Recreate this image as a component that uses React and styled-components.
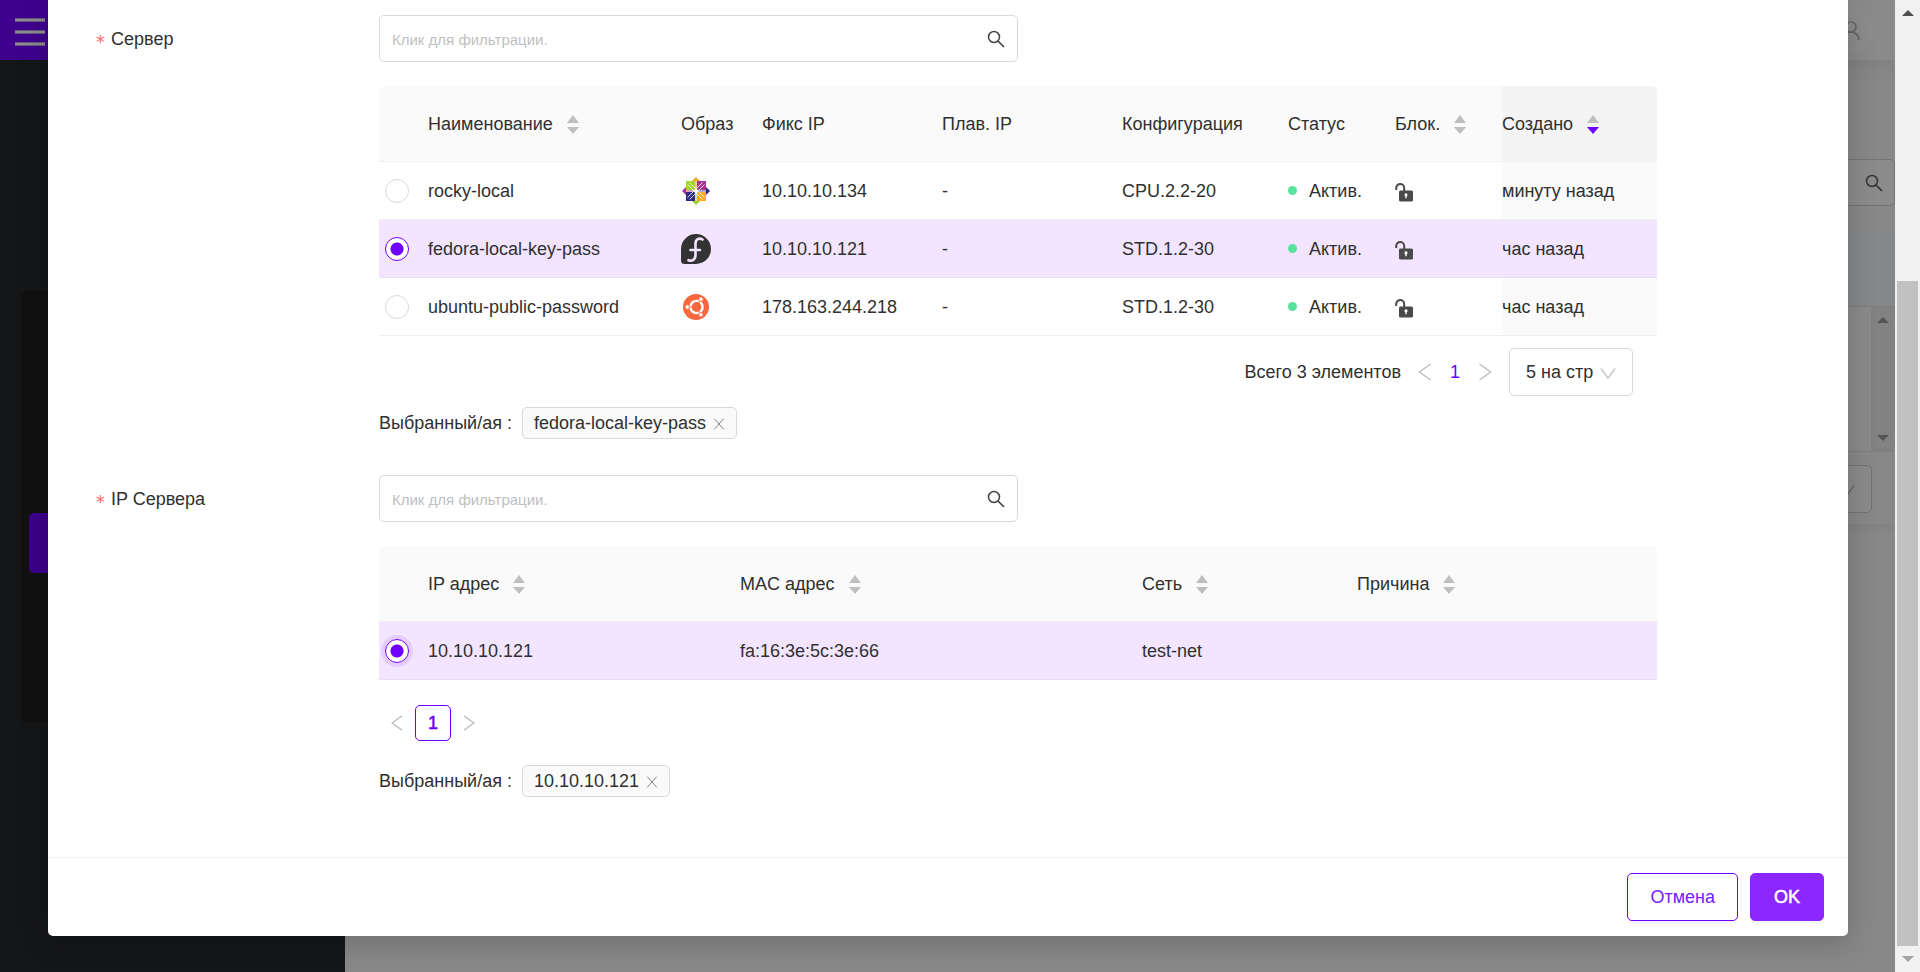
import React, { useState } from 'react';
import styled, { createGlobalStyle } from 'styled-components';

const GlobalStyle = createGlobalStyle`
    *, *::before, *::after {
        box-sizing: border-box;
    }

    body {
        margin: 0;
        overflow: hidden;
        background: #8a8a8a;
        color: #303030;
        font-family: "Liberation Sans", Arial, sans-serif;
        font-size: 18px;
        line-height: 28px;
    }

    button, input, select {
        font: inherit;
        color: inherit;
    }
`;

const servers = [
    { id: 'rocky', name: 'rocky-local', image: 'centos', fixed: '10.10.10.134', config: 'CPU.2.2-20', created: 'минуту назад' },
    { id: 'fedora', name: 'fedora-local-key-pass', image: 'fedora', fixed: '10.10.10.121', config: 'STD.1.2-30', created: 'час назад' },
    { id: 'ubuntu', name: 'ubuntu-public-password', image: 'ubuntu', fixed: '178.163.244.218', config: 'STD.1.2-30', created: 'час назад' },
];

const ports = [
    { id: 'port1', ip: '10.10.10.121', mac: 'fa:16:3e:5c:3e:66', network: 'test-net', reason: '' },
];

const serverCols = [49, 253, 81, 180, 180, 166, 107, 107, 155];
const portCols = [49, 312, 402, 215, 300];

/* Icons */

const SearchIcon = () => (
    <svg width="20" height="20" viewBox="0 0 20 20" fill="none" stroke="currentColor" strokeWidth="1.500" aria-hidden="true">
        <circle cx="8" cy="8" r="5.500" />
        <path d="M12 12l6 6" strokeWidth="1.700" />
    </svg>
);

const Chevron = ({ d, size = 18 }) => (
    <svg width={size} height={size} viewBox="0 0 18 18" fill="none" stroke="currentColor" strokeWidth="1.500" aria-hidden="true">
        <path d={d} />
    </svg>
);

const LeftIcon = ({ size }) => <Chevron size={size} d="M14.500 1L3.500 9l11 8" />;
const RightIcon = ({ size }) => <Chevron size={size} d="M3.500 1l11 8-11 8" />;
const DownIcon = () => <Chevron size={16} d="M1 5l8 11 8-11" />;
const CloseIcon = () => <Chevron size={12} d="M2 1l14 16M16 1L2 17" />;

const UnlockIcon = () => (
    <svg width="19" height="19" viewBox="0 0 19 19" aria-hidden="true">
        <path d="M1.200 7V5a4 4 0 0 1 8 0v3" fill="none" stroke="#4a4a4a" strokeWidth="2" />
        <rect x="4" y="7.500" width="14" height="11" rx="1.500" fill="#4a4a4a" />
        <path d="M11 10.300a1.600 1.600 0 0 1 .7 3v1.900h-1.400v-1.900a1.600 1.600 0 0 1 .7-3z" fill="#fff" />
    </svg>
);

const CentosIcon = () => (
    <svg width="28" height="28" viewBox="0 0 28 28" aria-hidden="true">
        <path fill="#efa724" d="M14 0l4 4h-8z" />
        <path fill="#262577" d="M28 14l-4-4v8z" />
        <path fill="#9ccd2a" d="M14 28l4-4h-8z" />
        <path fill="#a8348f" d="M0 14l4-4v8z" />
        <path fill="#a3d52d" d="M4 4h9v9H4z" />
        <path fill="#a8348f" d="M15 4h9v9h-9z" />
        <path fill="#2d2c86" d="M4 15h9v9H4z" />
        <path fill="#f7ab25" d="M15 15h9v9h-9z" />
        <path fill="#f3d08a" d="M13 4h2v9h-2z" />
        <path fill="#cde69a" d="M13 15h2v9h-2z" />
        <path fill="#d7a5cc" d="M4 13h9v2H4z" />
        <path fill="#a9a8d0" d="M15 13h9v2h-9z" />
        <path stroke="#fff" strokeWidth=".8" fill="none" d="M5.500 7.500L14 16M7.500 5.500L16 14M22.500 7.500L14 16M20.500 5.500L12 14M5.500 20.500L14 12M7.500 22.500L16 14M22.500 20.500L14 12M20.500 22.500L12 14" />
        <circle cx="14" cy="14" r="2" fill="#fff" />
    </svg>
);

const FedoraIcon = () => (
    <svg width="30" height="30" viewBox="0 0 30 30" aria-hidden="true">
        <path fill="#333" d="M15 0a15 15 0 1 1 0 30H3.500A3.500 3.500 0 0 1 0 26.500V15A15 15 0 0 1 15 0z" />
        <path fill="none" stroke="#f3e5ff" strokeWidth="2.600" strokeLinecap="round" d="M21.500 5.500C18 3.300 14.500 5.500 14.500 9.500v11.500c0 4.500-3.500 6.700-7 5.200M9.500 16h9.500" />
    </svg>
);

const UbuntuIcon = () => (
    <svg width="26" height="26" viewBox="0 0 26 26" aria-hidden="true">
        <circle cx="13" cy="13" r="13" fill="#f9673e" />
        <circle cx="13.500" cy="13" r="6" fill="none" stroke="#fff" strokeWidth="2.600" />
        <g stroke="#f9673e" strokeWidth="1.200">
            <path d="M13.500 13H3M13.500 13l5 9M13.500 13l5-9" />
        </g>
        <circle cx="13.500" cy="13" r="4.700" fill="#f9673e" />
        <g fill="#fff" stroke="#f9673e" strokeWidth=".8">
            <circle cx="4.300" cy="13" r="2.200" />
            <circle cx="17.900" cy="5.200" r="2.200" />
            <circle cx="17.900" cy="20.800" r="2.200" />
        </g>
    </svg>
);

const images = { centos: CentosIcon, fedora: FedoraIcon, ubuntu: UbuntuIcon };

/* Parts */

const Sorter = ({ active }) => (
    <SortButton type="button" aria-label="Сортировать">
        <svg width="12" height="20" viewBox="0 0 12 20" aria-hidden="true">
            <path d="M6 0l6 8H0z" fill="#bfbfbf" />
            <path d="M0 12h12l-6 7z" fill={active ? '#6f00ff' : '#bfbfbf'} />
        </svg>
    </SortButton>
);

const Filter = ({ id }) => (
    <FilterBox>
        <FilterInput id={id} type="text" placeholder="Клик для фильтрации." />
        <IconButton type="button" aria-label="Поиск"><SearchIcon /></IconButton>
    </FilterBox>
);

const Cols = ({ widths }) => (
    <colgroup>
        {widths.map((w, i) => <Col key={i} $w={w} />)}
    </colgroup>
);

const Selected = ({ value }) => (
    <SelectedRow>
        <span>Выбранный/ая :</span>
        <Tag>
            {value}
            <TagClose type="button" aria-label="Удалить"><CloseIcon /></TagClose>
        </Tag>
    </SelectedRow>
);

function ServerTable({ selected, onSelect }) {
    return (
        <Table>
            <Cols widths={serverCols} />
            <thead>
                <tr>
                    <Th />
                    <Th>Наименование<Sorter /></Th>
                    <Th>Образ</Th>
                    <Th>Фикс IP</Th>
                    <Th>Плав. IP</Th>
                    <Th>Конфигурация</Th>
                    <Th>Статус</Th>
                    <Th>Блок.<Sorter /></Th>
                    <Th $sorted>Создано<Sorter active /></Th>
                </tr>
            </thead>
            <tbody>
                {servers.map(s => {
                    const Image = images[s.image];
                    return (
                        <Row key={s.id} $selected={s.id === selected}>
                            <Td $radio>
                                <Radio type="radio" name="server" aria-label={s.name} checked={s.id === selected} onChange={() => onSelect(s.id)} />
                            </Td>
                            <Td>{s.name}</Td>
                            <Td><ImageCell><Image /></ImageCell></Td>
                            <Td>{s.fixed}</Td>
                            <Td>-</Td>
                            <Td>{s.config}</Td>
                            <Td><Status>Актив.</Status></Td>
                            <Td><LockCell><UnlockIcon /></LockCell></Td>
                            <Td $sorted>{s.created}</Td>
                        </Row>
                    );
                })}
            </tbody>
        </Table>
    );
}

function PortTable() {
    return (
        <Table>
            <Cols widths={portCols} />
            <thead>
                <tr>
                    <Th />
                    <Th>IP адрес<Sorter /></Th>
                    <Th>MAC адрес<Sorter /></Th>
                    <Th>Сеть<Sorter /></Th>
                    <Th>Причина<Sorter /></Th>
                </tr>
            </thead>
            <tbody>
                {ports.map(p => (
                    <Row key={p.id} $selected>
                        <Td $radio><Radio type="radio" name="port" aria-label={p.ip} defaultChecked $halo /></Td>
                        <Td>{p.ip}</Td>
                        <Td>{p.mac}</Td>
                        <Td>{p.network}</Td>
                        <Td>{p.reason}</Td>
                    </Row>
                ))}
            </tbody>
        </Table>
    );
}

function Backdrop() {
    return (
        <Back aria-hidden="true">
            <SideBar>
                <MenuHead><Burger><i /><i /><i /></Burger></MenuHead>
                <MenuGroup><MenuActive /></MenuGroup>
            </SideBar>
            <Content>
                <TopBar>
                    <Avatar>
                        <svg width="20" height="20" viewBox="0 0 20 20" fill="none" stroke="#666" strokeWidth="1.700">
                            <circle cx="9" cy="6" r="5" />
                            <path d="M1 19a8 8 0 0 1 16 0" />
                        </svg>
                    </Avatar>
                </TopBar>
                <BackSearch><SearchIcon /></BackSearch>
                <BackHead />
                <BackList>
                    <BackScroll><Arrow $color="#555" /><Arrow $down $color="#555" /></BackScroll>
                </BackList>
                <BackFooter><BackSelect><DownIcon /></BackSelect></BackFooter>
            </Content>
        </Back>
    );
}

function App() {
    const [selected, setSelected] = useState('fedora');
    const server = servers.find(s => s.id === selected);

    return (
        <Screen>
            <GlobalStyle />
            <View>
                <Backdrop />
                <Modal role="dialog" aria-label="Сервер">
                    <ModalBody>
                        <Field>
                            <Label htmlFor="server-filter">Сервер</Label>
                            <div>
                                <Filter id="server-filter" />
                                <ServerTable selected={selected} onSelect={setSelected} />
                                <Pager>
                                    <Total>Всего 3 элементов</Total>
                                    <PageButton type="button" aria-label="Назад"><LeftIcon /></PageButton>
                                    <PageButton type="button" $current>1</PageButton>
                                    <PageButton type="button" aria-label="Вперед"><RightIcon /></PageButton>
                                    <SizeBox>
                                        <SizeSelect aria-label="Размер страницы" defaultValue="5">
                                            <option value="5">5 на стр</option>
                                            <option value="10">10 на стр</option>
                                        </SizeSelect>
                                        <DownIcon />
                                    </SizeBox>
                                </Pager>
                                <Selected value={server.name} />
                            </div>
                        </Field>
                        <Field>
                            <Label htmlFor="port-filter">IP Сервера</Label>
                            <div>
                                <Filter id="port-filter" />
                                <PortTable />
                                <SmallPager>
                                    <PageButton type="button" $small aria-label="Назад"><LeftIcon size={16} /></PageButton>
                                    <PageButton type="button" $small $current>1</PageButton>
                                    <PageButton type="button" $small aria-label="Вперед"><RightIcon size={16} /></PageButton>
                                </SmallPager>
                                <Selected value="10.10.10.121" />
                            </div>
                        </Field>
                    </ModalBody>
                    <ModalFooter>
                        <Button type="button">Отмена</Button>
                        <Button type="button" $primary>OK</Button>
                    </ModalFooter>
                </Modal>
            </View>
            <ScrollBar aria-hidden="true">
                <Arrow $color="#505050" />
                <Thumb />
                <Arrow $down $color="#a3a3a3" />
            </ScrollBar>
        </Screen>
    );
}

export default App;

const Screen = styled.div`
    display: flex;
    height: 100vh;
    overflow: hidden;
`;

const View = styled.main`
    flex: 1;
    min-width: 0;
    display: grid;
    grid-template: minmax(0, 1fr) / minmax(0, 1fr);

    > * {
        grid-area: 1 / 1;
    }
`;

const ScrollBar = styled.div`
    width: 25px;
    padding: 10px 2px;
    display: flex;
    flex-direction: column;
    align-items: center;
    background: #f1f1f1;
`;

const Thumb = styled.div`
    align-self: stretch;
    height: 665px;
    margin: auto 0 10px;
    background: #c1c1c1;
`;

const Arrow = styled.span`
    width: 0;
    border: 6px solid transparent;
    border-width: ${p => (p.$down ? '6px 6px 0' : '0 6px 6px')};
    border-${p => (p.$down ? 'top' : 'bottom')}-color: ${p => p.$color};
`;

/* Page behind the dialog */

const Back = styled.div`
    display: flex;
    min-width: 0;
`;

const SideBar = styled.div`
    width: 345px;
    background: #151618;
`;

const MenuHead = styled.div`
    height: 60px;
    padding: 18px 15px;
    background: #3f008d;
`;

const Burger = styled.div`
    width: 30px;
    display: grid;
    gap: 8px;

    i {
        height: 4px;
        border: 1px solid #6b5785;
        border-width: 1px 0;
        background: #8c8c8c;
    }
`;

const MenuGroup = styled.div`
    height: 431px;
    margin: 231px 21px 0;
    padding: 222px 8px 0;
    border-radius: 5px;
    background: #111;
`;

const MenuActive = styled.div`
    height: 60px;
    border-radius: 5px;
    background: #3d0089;
`;

const Content = styled.div`
    flex: 1;
    display: flex;
    flex-direction: column;
    background: #888;
`;

const TopBar = styled.div`
    height: 60px;
    padding: 8px 21px;
    display: flex;
    justify-content: flex-end;
    background: #8a8a8a;
    box-shadow: 0 5px 20px rgba(0, 0, 0, 0.08);
`;

const Avatar = styled.div`
    width: 45px;
    height: 45px;
    display: grid;
    place-items: center;
    border-radius: 50%;
    background: #8c8c8c;
`;

const BackSearch = styled.div`
    height: 47px;
    margin: 99px 0 24px;
    padding-right: 10px;
    display: flex;
    align-items: center;
    justify-content: flex-end;
    border: 1px solid #727272;
    border-radius: 5px;
    background: #8b8b8b;
    color: #333;
`;

const BackHead = styled.div`
    height: 77px;
    border-bottom: 1px solid #7b7d7f;
    background: #85878a;
`;

const BackList = styled.div`
    height: 145px;
    display: flex;
    justify-content: flex-end;
    border-bottom: 1px solid #818181;
    background: #8b8b8b;
`;

const BackScroll = styled.div`
    width: 24px;
    padding: 10px 0;
    display: flex;
    flex-direction: column;
    align-items: center;
    justify-content: space-between;
    background: #828282;
`;

const BackFooter = styled.div`
    padding: 13px 23px 11px;
    display: flex;
    justify-content: flex-end;
    box-shadow: 0 3px 10px rgba(0, 0, 0, 0.06);
`;

const BackSelect = styled.div`
    width: 124px;
    height: 48px;
    padding-right: 16px;
    display: flex;
    align-items: center;
    justify-content: flex-end;
    border: 1px solid #727272;
    border-radius: 5px;
    background: #8b8b8b;
    color: #666;
`;

/* Dialog */

const Modal = styled.section`
    align-self: start;
    margin: 0 47px 0 48px;
    border-radius: 0 0 5px 5px;
    background: #fff;
    box-shadow: 0 6px 30px rgba(0, 0, 0, 0.2);
`;

const ModalBody = styled.div`
    padding: 15px 191px 60px 47px;
    display: flex;
    flex-direction: column;
    gap: 36px;
`;

const ModalFooter = styled.footer`
    padding: 15px 24px;
    display: flex;
    justify-content: flex-end;
    gap: 12px;
    border-top: 1px solid #f0f0f0;
`;

const Button = styled.button`
    min-width: 74px;
    height: 48px;
    padding: 0 22px;
    border: 1px solid ${p => (p.$primary ? '#8c27ff' : '#6f00ff')};
    border-radius: 5px;
    background: ${p => (p.$primary ? '#8c27ff' : '#fff')};
    color: ${p => (p.$primary ? '#fff' : '#7a1aff')};
    -webkit-text-stroke: ${p => (p.$primary ? '0.500px #fff' : '0')};
    box-shadow: 0 3px 0 rgba(0, 0, 0, 0.03);
    cursor: pointer;
`;

const Field = styled.div`
    display: grid;
    grid-template-columns: 284px minmax(0, 1fr);
`;

const Label = styled.label`
    align-self: start;
    padding-top: 10px;
    display: flex;
    gap: 6px;

    &::before {
        content: "∗";
        width: 10px;
        color: #ff6b6d;
        font-family: "DejaVu Sans Mono", monospace;
    }
`;

const FilterBox = styled.div`
    width: 50%;
    height: 47px;
    margin-bottom: 24px;
    padding: 0 11px 0 12px;
    display: flex;
    align-items: center;
    border: 1px solid #d9d9d9;
    border-radius: 5px;
`;

const FilterInput = styled.input`
    flex: 1;
    min-width: 0;
    padding: 2px 0 0;
    border: none;
    outline: none;
    background: transparent;
    font-size: 15px;

    &::placeholder {
        color: #bfbfbf;
    }
`;

const IconButton = styled.button`
    padding: 0;
    display: flex;
    border: none;
    background: none;
    color: #444;
    cursor: pointer;
`;

const Table = styled.table`
    width: 100%;
    table-layout: fixed;
    border-collapse: separate;
    border-spacing: 0;
`;

const Col = styled.col`
    width: ${p => p.$w}px;
`;

const Th = styled.th`
    height: 76px;
    padding: 0;
    border-bottom: 1px solid #f0f0f0;
    background: ${p => (p.$sorted ? '#f4f4f4' : '#fafafa')};
    font-weight: 400;
    text-align: left;
    white-space: nowrap;

    &:first-child {
        border-top-left-radius: 5px;
    }

    &:last-child {
        border-top-right-radius: 5px;
    }
`;

const SortButton = styled.button`
    margin-left: 14px;
    padding: 0;
    border: none;
    background: none;
    vertical-align: middle;
    line-height: 0;
    cursor: pointer;
`;

const Td = styled.td`
    height: 58px;
    padding: ${p => (p.$radio ? '0 6px' : '0')};
    border-bottom: 1px solid #f0f0f0;
    background: ${p => (p.$sorted ? '#fafafa' : '#fff')};
    white-space: nowrap;
`;

const Row = styled.tr`
    ${Td} {
        ${p => p.$selected && `
            background: #f3e5ff;
            border-color: #ecdcfa;
        `}
    }
`;

const Radio = styled.input`
    appearance: none;
    display: block;
    width: 24px;
    height: 24px;
    margin: 0;
    border: 1px solid #d9d9d9;
    border-radius: 50%;
    background: #fff;
    cursor: pointer;

    &:checked {
        border-color: #6f00ff;
        background: radial-gradient(circle, #6f00ff 6px, #fff 7px);
    }

    ${p => p.$halo && 'box-shadow: 0 0 0 4px rgba(111, 0, 255, 0.1);'}
`;

const ImageCell = styled.span`
    width: 30px;
    display: grid;
    place-items: center;
`;

const LockCell = styled.span`
    display: flex;
    padding-top: 3px;
`;

const Status = styled.span`
    display: flex;
    align-items: center;
    gap: 12px;

    &::before {
        content: "";
        width: 9px;
        height: 9px;
        border-radius: 50%;
        background: #57e39b;
    }
`;

const Pager = styled.nav`
    padding: 12px 24px 11px;
    display: flex;
    align-items: center;
    justify-content: flex-end;
`;

const Total = styled.span`
    margin-right: 9px;
`;

const SmallPager = styled.nav`
    padding: 25px 0 24px;
    display: flex;
`;

const PageButton = styled.button`
    width: ${p => (p.$small ? 36 : 30)}px;
    height: 36px;
    padding: 0;
    display: grid;
    place-items: center;
    border: 1px solid ${p => (p.$small && p.$current ? '#6f00ff' : 'transparent')};
    border-radius: 5px;
    background: none;
    color: ${p => (p.$current ? '#6f00ff' : '#bfbfbf')};
    -webkit-text-stroke: ${p => (p.$small && p.$current ? '0.500px #6f00ff' : '0')};
    cursor: pointer;
`;

const SizeBox = styled.div`
    width: 124px;
    height: 48px;
    margin-left: 9px;
    padding: 0 16px;
    display: flex;
    align-items: center;
    border: 1px solid #d9d9d9;
    border-radius: 5px;
    color: #bfbfbf;
`;

const SizeSelect = styled.select`
    flex: 1;
    min-width: 0;
    height: 46px;
    padding: 0;
    appearance: none;
    border: none;
    outline: none;
    background: transparent;
    color: #303030;
`;

const SelectedRow = styled.div`
    display: flex;
    align-items: center;
    gap: 10px;
`;

const Tag = styled.span`
    height: 32px;
    padding: 0 11px;
    display: flex;
    align-items: center;
    gap: 7px;
    border: 1px solid #d9d9d9;
    border-radius: 5px;
    background: #fafafa;
`;

const TagClose = styled.button`
    padding: 2px 0 0;
    display: flex;
    border: none;
    background: none;
    color: #808080;
    cursor: pointer;
`;
